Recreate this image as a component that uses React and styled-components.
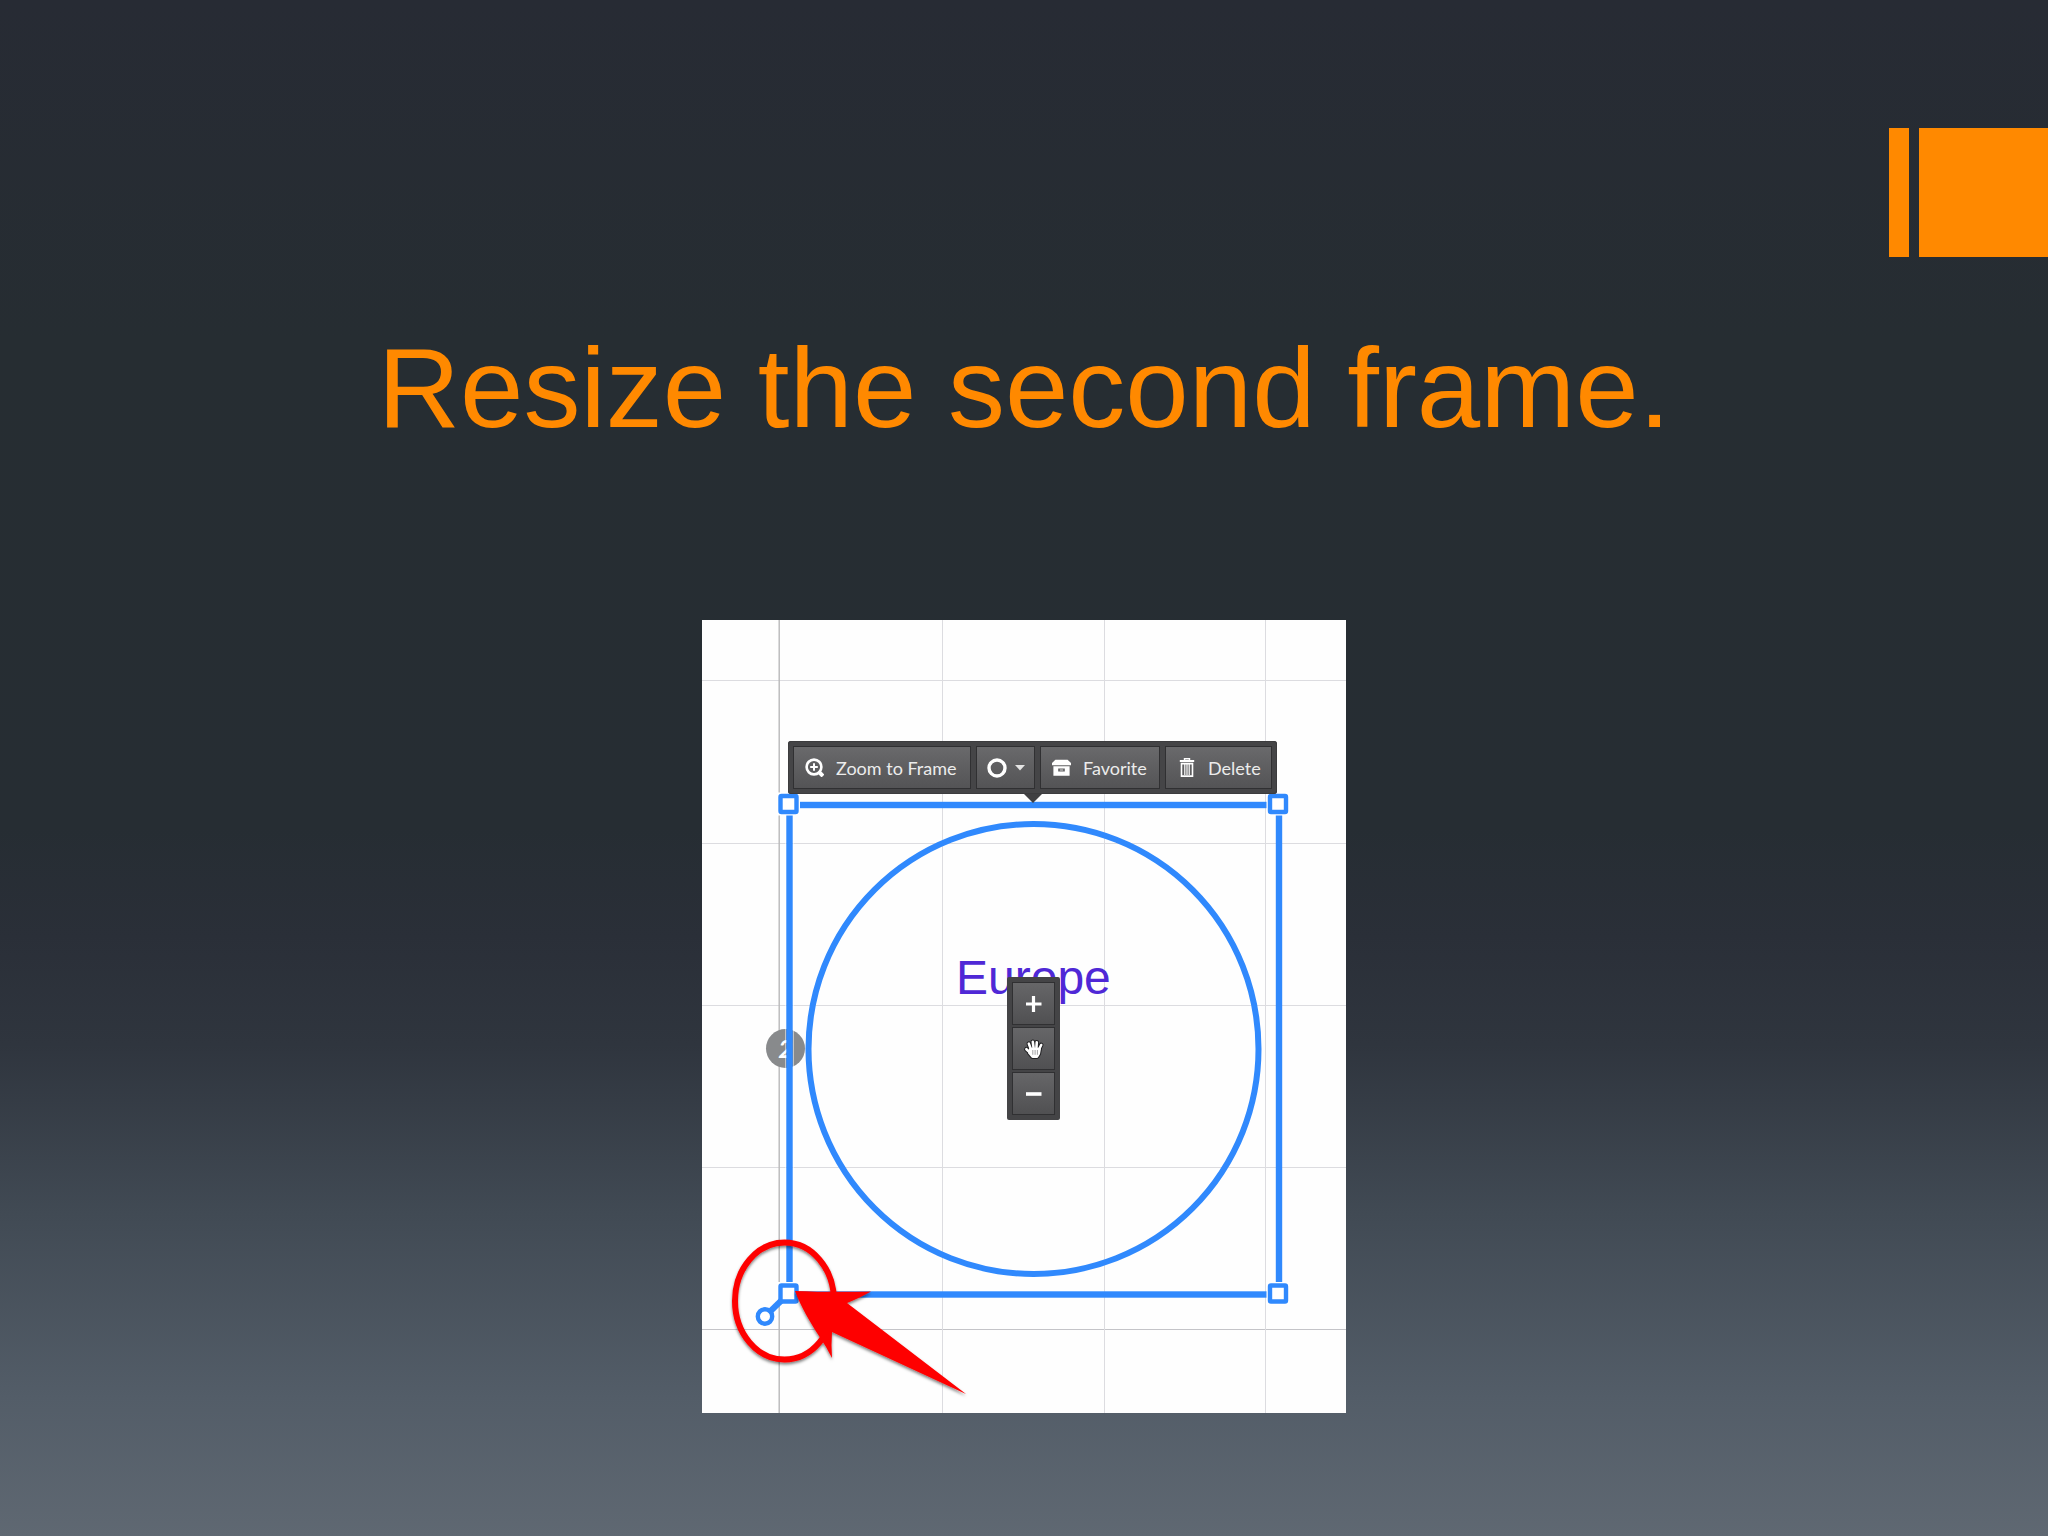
import React from 'react';
import styled, { createGlobalStyle } from 'styled-components';

const GlobalStyle = createGlobalStyle`
  * {
    box-sizing: border-box;
  }

  body {
    margin: 0;
    font-family: 'Liberation Sans', Arial, sans-serif;
  }
`;

const Slide = styled.main`
  display: flex;
  flex-direction: column;
  min-height: 100vh;
  padding-top: 128px;
  background: linear-gradient(
    to bottom,
    #272b34 0%,
    #262d32 22%,
    #262d33 54%,
    #2a2f38 61%,
    #2f353e 68%,
    #414a54 79%,
    #535d68 91%,
    #5f6872 100%
  );
`;

const Accent = styled.div`
  display: flex;
  justify-content: flex-end;
  gap: 10px;
`;

const AccentBar = styled.span`
  width: ${(props) => (props.$wide ? '129px' : '20px')};
  height: 129px;
  background-color: #ff8900;
`;

const Title = styled.h1`
  margin: 67px 0 168px;
  color: #ff8900;
  font-size: 114px;
  font-weight: 400;
  line-height: 128px;
  text-align: center;
`;

const Canvas = styled.section`
  position: relative;
  align-self: center;
  width: 644px;
  height: 793px;
  background-color: #fefefe;
  overflow: hidden;
`;

const Layer = styled.svg`
  position: absolute;
  inset: 0;
  width: 100%;
  height: 100%;
  pointer-events: none;
`;

const StepBadge = styled.span`
  position: absolute;
  top: 409px;
  left: 64px;
  width: 39px;
  height: 39px;
  border-radius: 50%;
  background-color: #888a8c;
  color: #ffffff;
  font-family: Lato, sans-serif;
  font-size: 25px;
  font-style: italic;
  font-weight: 700;
  line-height: 39px;
  text-align: center;
`;

const Label = styled.p`
  position: absolute;
  top: 331px;
  left: 254px;
  margin: 0;
  color: #4f28d6;
  font-size: 48px;
  line-height: 54px;
`;

const Toolbar = styled.div`
  position: absolute;
  top: 121px;
  left: 86px;
  display: flex;
  gap: 5px;
  padding: 5px;
  border-radius: 3px;
  background-color: #454547;
  box-shadow: inset 0 0 0 1px #3c3c3e;

  &::after {
    content: '';
    position: absolute;
    top: 100%;
    left: 236px;
    border: 9px solid transparent;
    border-top-color: #404042;
    border-bottom-width: 0;
  }
`;

const ToolButton = styled.button`
  display: flex;
  align-items: center;
  gap: ${(props) => (props.$compact ? '8px' : '12px')};
  width: ${(props) => props.$width}px;
  height: 43px;
  padding: 0 0 0 ${(props) => (props.$compact ? '10px' : '11px')};
  border: 1px solid #303032;
  background: linear-gradient(to bottom, #69696b, #545456);
  color: #ececec;
  font-family: Lato, sans-serif;
  font-size: 18px;
  line-height: 24px;
  white-space: nowrap;
  cursor: pointer;

  svg {
    flex: none;
  }
`;

const ZoomControl = styled.div`
  position: absolute;
  top: 357px;
  left: 305px;
  display: flex;
  flex-direction: column;
  gap: 2px;
  padding: 5px;
  border-radius: 2px;
  background-color: #444446;
`;

const ZoomButton = styled.button`
  display: flex;
  align-items: center;
  justify-content: center;
  width: 43px;
  height: 43px;
  padding: 0;
  border: 1px solid #303032;
  background: linear-gradient(to bottom, #666668, #505052);
  cursor: pointer;
`;

const ZoomIcon = () => (
  <svg width="19" height="19" viewBox="0 0 19 19" fill="none" stroke="#fff">
    <circle cx="9" cy="9" r="7.4" strokeWidth="2.6" />
    <path d="M9 5.2v7.6M5.2 9h7.6" strokeWidth="2" />
    <path d="M13.5 13.5l4.5 4.5" strokeWidth="4" />
  </svg>
);

const RingIcon = () => (
  <svg width="20" height="20" viewBox="0 0 20 20" fill="none" stroke="#fff">
    <circle cx="10" cy="10" r="8" strokeWidth="3.4" />
  </svg>
);

const CaretIcon = () => (
  <svg width="10" height="6" viewBox="0 0 10 6" fill="#e4e4e4">
    <path d="M0 0h10L5 5.6z" />
  </svg>
);

const FavoriteIcon = () => (
  <svg width="19" height="19" viewBox="0 0 19 19" fill="#fff">
    <path d="M3.4 1.8h12.2L19 5v2.2H0V5z" />
    <path fillRule="evenodd" d="M1.4 8.2h16.2v9.5H1.4zM6.2 10.4v3.2h6.6v-3.2z" />
    <path d="M7.8 11.6h3.4v.8H7.8z" />
  </svg>
);

const TrashIcon = () => (
  <svg width="19" height="19" viewBox="0 0 19 19" fill="none" stroke="#fff">
    <path d="M2.8 3h14.4" strokeWidth="2" />
    <path d="M7.5 2V.8h5V2" strokeWidth="1.4" />
    <path d="M4.5 5.5v12.6h11V5.5M3.7 5.6h12.6" strokeWidth="1.6" />
    <path d="M7.8 6v11M10 6v11M12.2 6v11" strokeWidth="1.2" />
  </svg>
);

const HandIcon = () => (
  <svg width="24" height="24" viewBox="0 0 24 24" strokeLinecap="round" strokeLinejoin="round">
    <g stroke="#222224" strokeWidth="4.6" fill="#222224">
      <path d="M8.8 12L6.8 6.6M11.6 11L10.8 4.8M14.4 11L14.8 5.2M17.2 12L19.2 8M8 15.5L4.4 12.2" />
      <path d="M8.4 12h9.2l-.8 4.6-1.8 3H10.6L7.4 16z" />
    </g>
    <g stroke="#fff" strokeWidth="2.6" fill="#fff">
      <path d="M8.8 12L6.8 6.6M11.6 11L10.8 4.8M14.4 11L14.8 5.2M17.2 12L19.2 8M8 15.5L4.4 12.2" />
      <path d="M8.4 12h9.2l-.8 4.6-1.8 3H10.6L7.4 16z" />
    </g>
    <path d="M10.8 13.4v4M13.1 13.4v4M15.4 13.4v4" stroke="#8a8a8d" strokeWidth=".8" />
  </svg>
);

const PlusIcon = () => (
  <svg width="16" height="16" viewBox="0 0 16 16" stroke="#fff" strokeWidth="3.2">
    <path d="M7.5 0v16M0 8h15.5" />
  </svg>
);

const MinusIcon = () => (
  <svg width="16" height="16" viewBox="0 0 16 16" stroke="#fff" strokeWidth="3.6">
    <path d="M0 8h15.5" />
  </svg>
);

const columns = [77, 240, 402, 563];
const rows = [60, 223, 385, 547, 709];
const handles = [
  [86.5, 184],
  [576, 184],
  [86.5, 673.5],
  [576, 673.5],
];

// the axis lines are drawn darker than the rest of the grid
const Grid = () => (
  <Layer viewBox="0 0 644 793" aria-hidden="true">
    {rows.map((y) => (
      <rect key={y} y={y} width="644" height="1" fill={y === 709 ? '#c4c4c8' : '#dcdce0'} />
    ))}
    {columns.map((x) => (
      <rect
        key={x}
        x={x === 77 ? 76.5 : x}
        width={x === 77 ? 1.4 : 1}
        height="793"
        fill={x === 77 ? '#b8b8ba' : '#dcdce0'}
      />
    ))}
  </Layer>
);

const Selection = () => (
  <Layer viewBox="0 0 644 793" fill="none" stroke="#3089fd" aria-hidden="true">
    <circle cx="331.5" cy="429" r="225" strokeWidth="6" />
    <path d="M83.5 192v472M91.5 192v472" stroke="#fff" strokeOpacity=".5" />
    <rect x="87.5" y="185" width="489.5" height="489.5" strokeWidth="6.4" />
    {handles.map(([x, y]) => (
      <rect key={`${x}-${y}`} x={x - 11.5} y={y - 11.5} width="23" height="23" fill="#fff" stroke="none" />
    ))}
    <path d="M63 696.5L84 676" strokeWidth="6" />
    {handles.map(([x, y]) => (
      <rect
        key={`${x}-${y}`}
        x={x - 8}
        y={y - 8}
        width="16"
        height="16"
        rx="1"
        fill="#fff"
        strokeWidth="4.4"
      />
    ))}
    <circle cx="63" cy="696.5" r="7.2" fill="#fff" strokeWidth="4.4" />
  </Layer>
);

const Pointer = () => (
  <Layer viewBox="0 0 644 793" aria-hidden="true">
    <defs>
      <filter id="pointer-shadow" x="-20%" y="-20%" width="140%" height="140%">
        <feDropShadow dx="0" dy="2" stdDeviation="1.5" floodColor="#000" floodOpacity=".5" />
      </filter>
    </defs>
    <g filter="url(#pointer-shadow)">
      <ellipse cx="82.5" cy="681" rx="49.5" ry="58.5" fill="none" stroke="#fe0000" strokeWidth="6" />
      <path
        d="M93 671C118 672 145 672 169 671.5C161 676 153 680 145 683L264 774L130 712Q129 724 130 738Q124 726 117 716C108 702 99 687 93 671z"
        fill="#fe0000"
      />
    </g>
  </Layer>
);

export default function App() {
  return (
    <>
      <GlobalStyle />
      <Slide>
        <Accent>
          <AccentBar />
          <AccentBar $wide />
        </Accent>
        <Title>Resize the second frame.</Title>
        <Canvas>
          <Grid />
          <StepBadge>2</StepBadge>
          <Selection />
          <Label>Europe</Label>
          <Toolbar>
            <ToolButton type="button" $width={178}>
              <ZoomIcon />
              Zoom to Frame
            </ToolButton>
            <ToolButton type="button" $width={59} $compact aria-label="Frame shape">
              <RingIcon />
              <CaretIcon />
            </ToolButton>
            <ToolButton type="button" $width={120}>
              <FavoriteIcon />
              Favorite
            </ToolButton>
            <ToolButton type="button" $width={107}>
              <TrashIcon />
              Delete
            </ToolButton>
          </Toolbar>
          <ZoomControl>
            <ZoomButton type="button" aria-label="Zoom in">
              <PlusIcon />
            </ZoomButton>
            <ZoomButton type="button" aria-label="Move">
              <HandIcon />
            </ZoomButton>
            <ZoomButton type="button" aria-label="Zoom out">
              <MinusIcon />
            </ZoomButton>
          </ZoomControl>
          <Pointer />
        </Canvas>
      </Slide>
    </>
  );
}
